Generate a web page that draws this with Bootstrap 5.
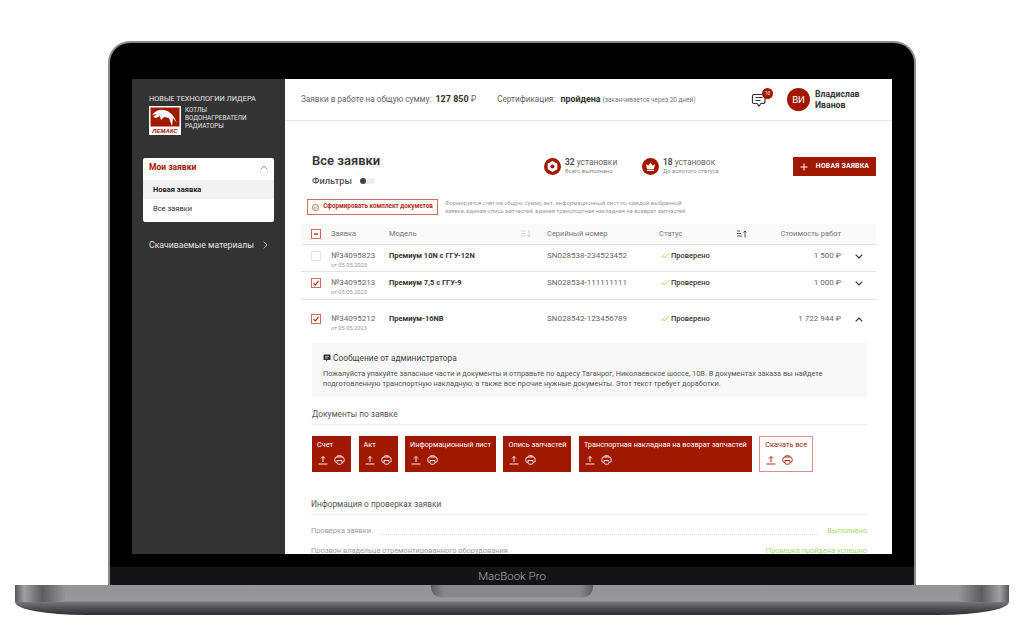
<!DOCTYPE html>
<html lang="ru">
<head>
  <meta charset="UTF-8" />
  <meta name="viewport" content="width=device-width, initial-scale=1.0" />
  <title>Лемакс - Все заявки</title>
  <link href="https://cdn.jsdelivr.net/npm/bootstrap@5.3.0/dist/css/bootstrap.min.css" rel="stylesheet" />
  <style>
    body { background: #fff; overflow: hidden; font-family: Roboto, "Liberation Sans", sans-serif; color: #333; }
    .stage { height: 633px; padding-top: 41px; }

    /* ноутбук */
    .lid { width: 808px; height: 544px; background: #000; border: 2px solid #8a8a8e; border-bottom: 0; border-radius: 22px 22px 0 0; padding: 36px 22px 0; position: relative; }
    .chin { position: absolute; left: 0; right: 0; bottom: 0; height: 18px; background: #141415; color: #a9a9a9; font-size: 11.5px; font-weight: 300; line-height: 18px; text-align: center; }
    .base { width: 994px; height: 30px; position: relative; border-radius: 0 0 70px 70px / 0 0 13px 13px;
      background: linear-gradient(#949498 0, #98989c 16px, #77777b 17px, #4c4c50 24px, #2f2f32 30px); }
    .base-end { position: absolute; top: 0; height: 17px; width: 50px; }
    .base-end.left-end { left: 0; background: linear-gradient(90deg, #55555a, #a0a0a4 18%, #5e5e62 55%, #949498); }
    .base-end.right-end { right: 0; background: linear-gradient(270deg, #55555a, #a0a0a4 18%, #5e5e62 55%, #949498); }
    .notch { width: 162px; height: 12px; margin: 0 auto; background: linear-gradient(90deg, #5f5f63, #88888c 8%, #88888c 92%, #5f5f63); border-radius: 0 0 9px 9px; }

    /* приложение */
    .app { height: 475px; width: 760px; background: #fff; overflow: hidden; }
    .side { width: 153px; background: #333; flex-shrink: 0; padding: 15px 11px 0; color: #e4e4e4; }
    .brand-top { font-size: 7.4px; line-height: 10px; padding-left: 6px; white-space: nowrap; }
    .brand-row { padding-left: 6px; margin-top: 2px; }
    .brand-list { font-size: 6.4px; line-height: 8px; margin-left: 4px; }
    .side-menu { margin-top: 23px; background: #fff; border-radius: 2px; height: 64px; }
    .side-head { height: 22px; padding: 0 6px 3px; color: #a01800; font-size: 8.5px; font-weight: 700; }
    .side-item { height: 19px; padding-left: 10px; font-size: 7.5px; line-height: 20px; color: #333; }
    .side-item.active-item { background: #f2f2f2; font-weight: 700; color: #222; }
    .side-link { margin-top: 17px; padding: 0 6px; font-size: 8.7px; line-height: 12px; color: #e4e4e4; }

    .main-col { min-width: 0; }
    .topbar { height: 42px; border-bottom: 1px solid #e6e6e6; padding-left: 16px; font-size: 8.2px; color: #666; white-space: nowrap; }
    .topbar b { color: #333; font-weight: 700; font-size: 8.9px; }
    .topbar small { font-size: 6.4px; color: #777; }
    .topbar b.sum-val { font-size: 9px; margin-left: 2px; }
    .cert { margin-left: 21px; }
    .cert b { margin-left: 3px; }
    .chat-wrap { position: relative; width: 16px; height: 16px; margin-left: auto; }
    .chat-badge { position: absolute; top: -4px; right: -6px; width: 11px; height: 11px; border-radius: 50%; background: #a01800; color: #fff; font-size: 4.5px; line-height: 11px; text-align: center; }
    .ava { width: 23px; height: 23px; border-radius: 50%; background: #a01800; color: #fff; font-size: 9.5px; line-height: 23px; text-align: center; margin-left: 20px; }
    .user-name { font-size: 8.7px; line-height: 11px; font-weight: 700; color: #333; margin: 0 29px 0 5px; white-space: normal; width: 48px; }

    .content { padding: 32px 16px 0; }
    .title-block { width: 243px; padding-left: 11px; }
    .page-title { font-size: 13px; line-height: 16px; font-weight: 600; color: #333; margin: 0; }
    .filters { margin-top: 5px; font-size: 9.3px; line-height: 14px; font-weight: 500; color: #555; }
    .toggle-off { width: 15px; height: 6px; border-radius: 3px; background: #efefef; margin-left: 8px; position: relative; }
    .toggle-off::before { content: ""; position: absolute; left: 0; top: 0; width: 6px; height: 6px; border-radius: 50%; background: #444; }
    .stat { margin-top: 4px; }
    .stat-a { width: 98px; }
    .stat-num { font-size: 8.4px; line-height: 10px; color: #666; white-space: nowrap; }
    .stat-num b { font-weight: 600; color: #444; }
    .stat-sub { font-size: 5.8px; line-height: 8px; color: #888; white-space: nowrap; }
    .btn-new { margin: 4px 0 0 auto; width: 83px; height: 19px; padding: 0; border: 0; border-radius: 0; background: #a01800; color: #fff; font-size: 6.9px; font-weight: 700; letter-spacing: .2px; white-space: nowrap; }
    .btn-new:hover { background: #a01800; color: #fff; }

    .doc-row { margin-top: 11px; margin-left: 6px; }
    .btn-kit { width: 131px; height: 16px; padding: 0; border: 1px solid #cf6b5f; border-radius: 0; color: #b3301f; background: #fff; font-size: 6.3px; font-weight: 700; white-space: nowrap; }
    .kit-note { margin-left: 7px; font-size: 5.8px; line-height: 8px; color: #999; white-space: nowrap; }

    .req-table { table-layout: fixed; width: 575px; margin: 9px 0 0; border-collapse: collapse; font-size: 8px; }
    .req-table th { height: 20px; padding: 0; background: #fafafa; border-bottom: 1px solid #e4e4e4; font-weight: 400; font-size: 7.5px; color: #777; vertical-align: middle; }
    .req-table td { padding: 6px 0 0; height: 27px; border-bottom: 1px solid #e4e4e4; vertical-align: top; color: #666; font-size: 8px; line-height: 10px; box-shadow: none; }
    .req-table .tall td { height: 38px; padding-top: 14px; border-bottom: 0; }
    .req-table .row-two td { height: 28px; }
    .req-table .det-cell { height: auto; padding: 6px 9px 0 11px; border: 0; }
    .box-ck { width: 10px; height: 10px; border: 1px solid #e3e3e3; margin-left: 10px; display: block; }
    .box-ck.on { border-color: #cf6b5f; position: relative; }
    .req-sub { font-size: 5.7px; line-height: 8px; color: #999; }
    .req-table td.model { font-weight: 700; color: #333; font-size: 7.5px; }
    .req-table td.status-ok { font-weight: 500; color: #333; font-size: 7.5px; }
    .check-ic { margin-right: 1px; }
    .price { text-align: right; }
    .req-table td.arrow-cell { text-align: right; padding-right: 13px; color: #333; }
    .req-table tr td.arrow-cell svg { display: inline-block; margin-top: 3px; }
    .req-table th.price-head { text-align: right; }

    .msg-box { height: 54px; background: #f8f8f8; padding: 9px 11px 0; }
    .msg-title { font-size: 8.4px; line-height: 12px; color: #444; gap: 2px; }
    .msg-text { margin: 5px 0 0; font-size: 7.35px; line-height: 10px; color: #555; }
    .sec-title { font-size: 8.3px; line-height: 12px; color: #555; padding-bottom: 4px; border-bottom: 1px solid #f0f0f0; margin: 11px 0 11px; }
    .tile-row { gap: 7.5px; }
    .tile { height: 36px; min-width: 39px; background: #a01800; color: #fff; padding: 3px 5px 0; font-size: 7.3px; line-height: 12px; white-space: nowrap; }
    .tile.outline { background: #fff; color: #a01800; border: 1px solid #d48f87; padding: 2px 5px 0; }
    .tile-icons { margin-top: 4px; height: 10px; padding-left: 1px; gap: 6px; }
    .info-title { margin-top: 26px; margin-bottom: 6px; margin-left: -1px; }
    .info-row { height: 20px; font-size: 7.4px; line-height: 20px; color: #999; white-space: nowrap; margin-left: -1px; }
    .dots { border-bottom: 1px dotted #ddd; height: 14px; margin: 0 10px; }
    .ok-text { color: #a6db6c; }
  </style>
</head>
<body>
  <svg class="d-none" xmlns="http://www.w3.org/2000/svg">
    <symbol id="up" viewBox="0 0 10 10"><path d="M5 7V1.500M3 3.500l2-2 2 2M.5 9h9" fill="none" stroke="currentColor" stroke-width=".9"/></symbol>
    <symbol id="printer" viewBox="0 0 11 10"><path d="M3 1.800Q3 .8 4 .8h3q1 0 1 1M3 7.500H2.500Q.8 7.500.8 5.500V4.500Q.8 2 3 2h5q2.200 0 2.200 2.500v1q0 2-1.700 2H8M3 5.500h5v2.200q0 1.500-1.500 1.500h-2Q3 9.200 3 7.700z" fill="none" stroke="currentColor" stroke-width=".9"/></symbol>
    <symbol id="dchk" viewBox="0 0 14 8"><path d="M1 4.500 3 7 8 1" fill="none" stroke="#b6dc8e" stroke-width=".8"/><path d="M5 5l1.500 2L13 1" fill="none" stroke="#7fc241" stroke-width=".9"/></symbol>
    <symbol id="chev-d" viewBox="0 0 8 5"><path d="M.7.700 4 4 7.300.700" fill="none" stroke="currentColor" stroke-width="1.200"/></symbol>
    <symbol id="chev-u" viewBox="0 0 8 5"><path d="M.7 4.300 4 1l3.300 3.300" fill="none" stroke="currentColor" stroke-width="1.200"/></symbol>
  </svg>

  <div class="stage d-flex flex-column align-items-center">
    <div class="lid">
      <div class="app d-flex">
        <aside class="side">
          <div class="brand-top">НОВЫЕ ТЕХНОЛОГИИ ЛИДЕРА</div>
          <div class="brand-row d-flex align-items-start">
            <svg width="32" height="29" viewBox="0 0 32 29" class="flex-shrink-0">
              <rect width="32" height="29" fill="#fff"/>
              <rect x="1.500" y="1.500" width="29" height="19" fill="#a01800"/>
              <path d="M3 9Q8 3 15 4q8 1 13 13l-4-5-1 8-3-8-5-1-3 3-1-4-4 2-3-1 4-3z" fill="#fff"/>
              <rect x="1.500" y="21" width="29" height="6.500" fill="#fff"/>
              <text x="16" y="27" text-anchor="middle" font-family="Liberation Sans, sans-serif" font-size="6" font-weight="700" font-style="italic" fill="#a01800">ЛЕМАКС</text>
            </svg>
            <div class="brand-list">КОТЛЫ<br>ВОДОНАГРЕВАТЕЛИ<br>РАДИАТОРЫ</div>
          </div>
          <div class="side-menu">
            <div class="side-head d-flex align-items-center justify-content-between">
              <span>Мои заявки</span>
              <svg width="8" height="5" viewBox="0 0 8 5"><path d="M.5 4.500 4 1l3.500 3.500" fill="none" stroke="#c9655a" stroke-width=".8"/></svg>
            </div>
            <div class="side-item active-item">Новая заявка</div>
            <div class="side-item">Все заявки</div>
          </div>
          <div class="side-link d-flex align-items-center justify-content-between">
            <span>Скачиваемые материалы</span>
            <svg width="5" height="8" viewBox="0 0 5 8"><path d="M.7.700 4 4 .7 7.300" fill="none" stroke="#bbb"/></svg>
          </div>
        </aside>

        <div class="main-col flex-grow-1">
          <header class="topbar d-flex align-items-center">
            <span>Заявки в работе на общую сумму: <b class="sum-val">127 850</b> ₽</span>
            <span class="cert">Сертификация: <b>пройдена</b> <small>(заканчивается через 20 дней)</small></span>
            <div class="chat-wrap">
              <svg width="16" height="16" viewBox="0 0 16 16"><path d="M3 2.500h9.500q1.500 0 1.500 1.500v6q0 1.500-1.500 1.500H10l-2 2.500-2-2.500H3Q1.500 11.500 1.500 10V4Q1.500 2.500 3 2.500zM4.500 5.500h7M4.500 8.500h5" fill="none" stroke="#333" stroke-width="1.200"/></svg>
              <span class="chat-badge">10</span>
            </div>
            <div class="ava">ВИ</div>
            <div class="user-name">Владислав Иванов</div>
          </header>

          <div class="content">
            <div class="d-flex align-items-start">
              <div class="title-block">
                <h1 class="page-title">Все заявки</h1>
                <div class="filters d-flex align-items-center">Фильтры <span class="toggle-off"></span></div>
              </div>
              <div class="stat stat-a d-flex align-items-center gap-1">
                <svg width="17" height="17" viewBox="0 0 17 17" class="flex-shrink-0"><circle cx="8.500" cy="8.500" r="8.500" fill="#a01800"/><path d="M8.500 3 13.300 5.700v5.600L8.500 14 3.700 11.300V5.700z" fill="#fff"/><circle cx="8.500" cy="8.500" r="2" fill="#a01800"/></svg>
                <div><div class="stat-num"><b>32</b> установки</div><div class="stat-sub">Всего выполнено</div></div>
              </div>
              <div class="stat d-flex align-items-center gap-1">
                <svg width="17" height="17" viewBox="0 0 17 17" class="flex-shrink-0"><circle cx="8.500" cy="8.500" r="8.500" fill="#a01800"/><path d="M4 6l2.300 1.800L8.500 4.500l2.200 3.300L13 6l-1 5H5zM5 11.800h7v1.200H5z" fill="#fff"/></svg>
                <div><div class="stat-num"><b>18</b> установок</div><div class="stat-sub">До золотого статуса</div></div>
              </div>
              <button class="btn btn-new d-flex align-items-center justify-content-center gap-1" type="button">
                <svg width="8" height="8" viewBox="0 0 8 8" class="me-1"><path d="M4 .5v7M.5 4h7" stroke="#fff" stroke-width="1"/></svg>
                НОВАЯ ЗАЯВКА
              </button>
            </div>

            <div class="doc-row d-flex align-items-center">
              <button class="btn btn-kit d-flex align-items-center justify-content-center gap-1" type="button">
                <svg width="7" height="7" viewBox="0 0 8 8"><circle cx="4" cy="4" r="3.500" fill="none" stroke="#a01800" stroke-width=".7"/><path d="M2.300 4 3.500 5.200 5.700 2.900" fill="none" stroke="#a01800" stroke-width=".7"/></svg>
                Сформировать комплект докуметов
              </button>
              <div class="kit-note">Формируется счет на общую сумму, акт, информационный лист по каждой выбранной<br>заявке, единая опись запчастей, единая транспортная накладная на возврат запчастей</div>
            </div>

            <table class="table req-table">
              <colgroup>
                <col style="width:30px"><col style="width:58px"><col style="width:158px"><col style="width:112px"><col style="width:78px"><col style="width:104px"><col style="width:35px">
              </colgroup>
              <thead>
                <tr>
                  <th><span class="box-ck on"><svg width="8" height="8" viewBox="0 0 8 8" class="d-block"><path d="M2 4h4" stroke="#a01800" stroke-width="1.200"/></svg></span></th>
                  <th>Заявка</th>
                  <th>
                    <div class="d-flex justify-content-between align-items-center pe-3">Модель
                      <svg width="10" height="8" viewBox="0 0 10 8"><path d="M0 1h5M0 3.500h5M0 6h5" stroke="#ddd"/><path d="M8 0v7M6.500 5.500 8 7l1.500-1.500" fill="none" stroke="#ccc" stroke-width=".8"/></svg>
                    </div>
                  </th>
                  <th>Серийный номер</th>
                  <th>Статус</th>
                  <th class="price-head">
                    <div class="d-flex justify-content-between align-items-center">
                      <svg width="10" height="8" viewBox="0 0 10 8"><path d="M0 1h3M0 3.500h4M0 6h5" stroke="#555"/><path d="M8 7.500V1M6.500 2.500 8 1l1.500 1.500" fill="none" stroke="#444" stroke-width=".9"/></svg>
                      <span>Стоимость работ</span>
                    </div>
                  </th>
                  <th></th>
                </tr>
              </thead>
              <tbody>
                <tr>
                  <td><span class="box-ck"></span></td>
                  <td>№34095823<div class="req-sub">от 05.05.2023</div></td>
                  <td class="model">Премиум 10N с ГГУ-12N</td>
                  <td>SN028538-234523452</td>
                  <td class="status-ok"><svg width="11" height="7" class="check-ic"><use href="#dchk"/></svg>Проверено</td>
                  <td class="price">1 500 ₽</td>
                  <td class="arrow-cell"><svg width="8" height="5"><use href="#chev-d"/></svg></td>
                </tr>
                <tr class="row-two">
                  <td><span class="box-ck on"><svg width="8" height="8" viewBox="0 0 8 8" class="d-block"><path d="M1.500 4 3.300 6 6.500 1.800" fill="none" stroke="#a01800" stroke-width="1.100"/></svg></span></td>
                  <td>№34095213<div class="req-sub">от 05.05.2023</div></td>
                  <td class="model">Премиум 7,5 с ГГУ-9</td>
                  <td>SN028534-111111111</td>
                  <td class="status-ok"><svg width="11" height="7" class="check-ic"><use href="#dchk"/></svg>Проверено</td>
                  <td class="price">1 000 ₽</td>
                  <td class="arrow-cell"><svg width="8" height="5"><use href="#chev-d"/></svg></td>
                </tr>
                <tr class="tall">
                  <td><span class="box-ck on"><svg width="8" height="8" viewBox="0 0 8 8" class="d-block"><path d="M1.500 4 3.300 6 6.500 1.800" fill="none" stroke="#a01800" stroke-width="1.100"/></svg></span></td>
                  <td>№34095212<div class="req-sub">от 05.05.2023</div></td>
                  <td class="model">Премиум-16NB</td>
                  <td>SN028542-123456789</td>
                  <td class="status-ok"><svg width="11" height="7" class="check-ic"><use href="#dchk"/></svg>Проверено</td>
                  <td class="price">1 722 944 ₽</td>
                  <td class="arrow-cell"><svg width="8" height="5"><use href="#chev-u"/></svg></td>
                </tr>
                <tr>
                  <td colspan="7" class="det-cell">
                    <div class="msg-box">
                      <div class="msg-title d-flex align-items-center">
                        <svg width="8" height="8" viewBox="0 0 8 8"><path d="M1 .5h6q.5 0 .5.500v4.500q0 .5-.5.500H4.500L3 7.500V6H1q-.5 0-.5-.5V1Q.5.500 1 .500z" fill="#333"/><path d="M2 2.500h4M2 4h3" stroke="#f8f8f8" stroke-width=".6"/></svg>
                        <span>Сообщение от администратора</span>
                      </div>
                      <p class="msg-text">Пожалуйста упакуйте запасные части и документы и отправьте по адресу Таганрог, Николаевское шоссе, 10В. В документах заказа вы найдете подготовленную транспортную накладную, а также все прочие нужные документы. Этот текст требует доработки.</p>
                    </div>
                    <div class="sec-title">Документы по заявке</div>
                    <div class="tile-row d-flex">
                      <div class="tile"><div>Счет</div><div class="tile-icons d-flex align-items-center"><svg width="10" height="10"><use href="#up"/></svg><svg width="11" height="10"><use href="#printer"/></svg></div></div>
                      <div class="tile"><div>Акт</div><div class="tile-icons d-flex align-items-center"><svg width="10" height="10"><use href="#up"/></svg><svg width="11" height="10"><use href="#printer"/></svg></div></div>
                      <div class="tile"><div>Информационный лист</div><div class="tile-icons d-flex align-items-center"><svg width="10" height="10"><use href="#up"/></svg><svg width="11" height="10"><use href="#printer"/></svg></div></div>
                      <div class="tile"><div>Опись запчастей</div><div class="tile-icons d-flex align-items-center"><svg width="10" height="10"><use href="#up"/></svg><svg width="11" height="10"><use href="#printer"/></svg></div></div>
                      <div class="tile"><div>Транспортная накладная на возврат запчастей</div><div class="tile-icons d-flex align-items-center"><svg width="10" height="10"><use href="#up"/></svg><svg width="11" height="10"><use href="#printer"/></svg></div></div>
                      <div class="tile outline"><div>Скачать все</div><div class="tile-icons d-flex align-items-center"><svg width="10" height="10"><use href="#up"/></svg><svg width="11" height="10"><use href="#printer"/></svg></div></div>
                    </div>
                    <div class="sec-title info-title">Информация о проверках заявки</div>
                    <div class="info-row d-flex"><span>Проверка заявки</span><span class="dots flex-grow-1"></span><span class="ok-text">Выполнено</span></div>
                    <div class="info-row d-flex"><span>Прозвон владельца отремонтированного оборудования</span><span class="dots flex-grow-1"></span><span class="ok-text">Проверка пройдена успешно</span></div>
                  </td>
                </tr>
              </tbody>
            </table>
          </div>
        </div>
      </div>
      <div class="chin">MacBook Pro</div>
    </div>
    <div class="base">
      <div class="base-end left-end"></div>
      <div class="base-end right-end"></div>
      <div class="notch"></div>
    </div>
  </div>

  <script src="https://cdn.jsdelivr.net/npm/bootstrap@5.3.0/dist/js/bootstrap.bundle.min.js"></script>
</body>
</html>
